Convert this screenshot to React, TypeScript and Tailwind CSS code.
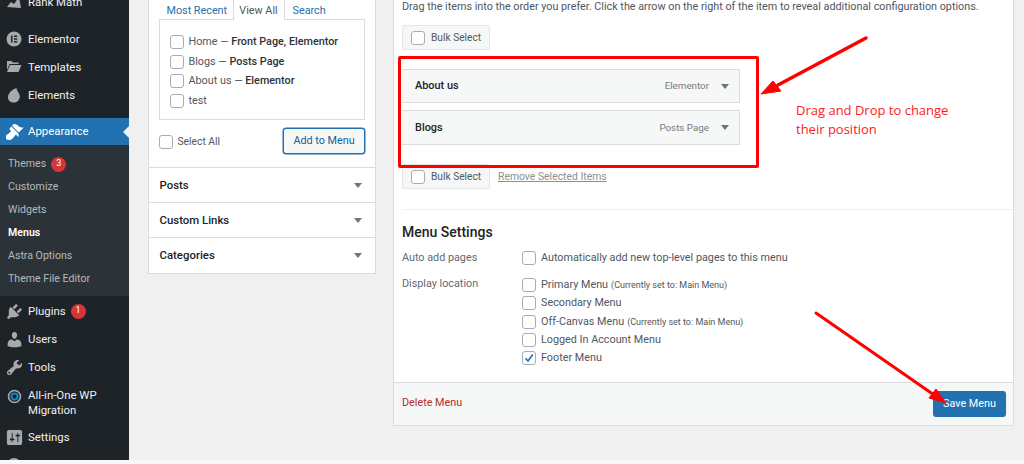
import React from "react";

const Dash = ({ d, size = 19 }: { d: string; size?: number }) => (
  <svg width={size} height={size} viewBox="0 0 20 20" fill="currentColor"><path d={d} /></svg>
);

const BRUSH = "M14.48 11.06L7.41 3.99l1.5-1.5c.5-.56 2.3-.47 3.51.32 1.21.8 1.43 1.28 2.91 2.1 1.18.64 2.45 1.26 4.45.85zm-.71.71L6.7 4.7 4.93 6.47c-.39.39-.39 1.02 0 1.41l1.06 1.06c.39.39.39 1.03 0 1.42-.6.6-1.43 1.11-2.21 1.69-.35.26-.7.53-1.01.84C1.43 13.23.48 14.62 1.5 18.5c3.88 1.02 5.27.07 6.78-1.44.31-.31.58-.66.84-1.01.58-.78 1.09-1.61 1.69-2.21.39-.39 1.03-.39 1.42 0l1.06 1.06c.39.39 1.02.39 1.41 0z";
const PLUG = "M13.11 4.36L9.87 7.6 8 5.73l3.24-3.24c.35-.34 1.05-.2 1.56.32.52.51.66 1.21.31 1.55zm-8 1.77l.91-1.12 9.01 9.01-1.19.84c-.71.71-2.63 1.16-3.82 1.16H6.14L4.9 17.26c-.59.59-1.54.59-2.12 0-.59-.58-.59-1.53 0-2.12l1.24-1.24v-3.88c0-1.13.4-3.19 1.09-3.89zm7.26 3.97l3.24-3.24c.34-.35 1.04-.21 1.55.31.52.51.66 1.21.31 1.55l-3.24 3.25z";
const USER = "M10 9.25c-2.27 0-2.73-3.44-2.73-3.44C7 4.02 7.82 2 9.97 2c2.16 0 2.98 2.02 2.71 3.81 0 0-.41 3.44-2.68 3.44zm0 2.57L12.72 10c2.39 0 4.52 2.33 4.52 4.53v2.49s-3.65 1.13-7.24 1.13c-3.65 0-7.24-1.13-7.24-1.13v-2.49c0-2.25 1.94-4.48 4.47-4.48z";
const TOOL = "M16.68 9.77c-1.34 1.34-3.3 1.67-4.95.99l-5.41 6.52c-.99.99-2.59.99-3.58 0s-.99-2.59 0-3.57l6.52-5.42c-.68-1.65-.35-3.61.99-4.95 1.28-1.28 3.12-1.62 4.72-1.06l-2.89 2.89 2.82 2.82 2.86-2.87c.53 1.58.18 3.39-1.08 4.65zM3.81 16.21c.4.39 1.04.39 1.43 0 .4-.4.4-1.04 0-1.43-.39-.4-1.03-.4-1.43 0-.39.39-.39 1.03 0 1.43z";
const SETTINGS = "M18 16V4c0-1.1-.9-2-2-2H4c-1.1 0-2 .9-2 2v12c0 1.1.9 2 2 2h12c1.1 0 2-.9 2-2zM8 11h1c.55 0 1 .45 1 1s-.45 1-1 1H8v1.5c0 .28-.22.5-.5.5s-.5-.22-.5-.5V13H6c-.55 0-1-.45-1-1s.45-1 1-1h1V5.5c0-.28.22-.5.5-.5s.5.22.5.5V11zm5-2h-1c-.55 0-1-.45-1-1s.45-1 1-1h1V5.5c0-.28.22-.5.5-.5s.5.22.5.5V7h1c.55 0 1 .45 1 1s-.45 1-1 1h-1v5.5c0 .28-.22.5-.5.5s-.5-.22-.5-.5V9z";

const Check = ({ on = false }: { on?: boolean }) => (
  <span className="w-[14px] h-[14px] shrink-0 rounded-[3px] border border-[#a9acb0] bg-white flex items-center justify-center">
    {on && (
      <svg width="12" height="12" viewBox="0 0 12 12"><path d="M2.5 6.2 L5 9 L9.8 2.6" fill="none" stroke="#2271b1" strokeWidth="1.7" /></svg>
    )}
  </span>
);

const Tri = () => <span className="block w-0 h-0 border-x-[4px] border-x-transparent border-t-[5.5px] border-t-[#70757a]" />;

const Top = ({ icon, children, badge }: { icon: React.ReactNode; children?: React.ReactNode; badge?: string }) => (
  <div className="h-[28px] flex items-center text-[#f0f0f1]">
    <span className="w-[26px] ml-[1px] shrink-0 flex justify-center text-[#a7aaad]">{icon}</span>
    <span className="ml-[1px] pt-[1px]">{children}</span>
    {badge && <Badge n={badge} />}
  </div>
);

const Badge = ({ n }: { n: string }) => (
  <span className="ml-[5px] w-[15px] h-[15px] rounded-full bg-[#d63638] text-white text-[9px] flex items-center justify-center">{n}</span>
);

const Sub = ({ children, bold, badge }: { children: React.ReactNode; bold?: boolean; badge?: string }) => (
  <div className={`h-[23px] pl-[8px] flex items-center text-[10.6px] ${bold ? "text-white font-semibold" : "text-[#b4b9be]"}`}>
    {children}
    {badge && <Badge n={badge} />}
  </div>
);

const PageItem = ({ label, note }: { label: string; note?: string }) => (
  <div className="h-[19.5px] flex items-center gap-[5px] whitespace-nowrap">
    <Check />
    <span>{label}{note && <> — <span className="font-medium text-[#2c3338]">{note}</span></>}</span>
  </div>
);

const Fold = ({ children, last }: { children: React.ReactNode; last?: boolean }) => (
  <div className={`h-[35px] flex items-center justify-between pl-[11px] pr-[13px] font-medium text-[#1d2327] text-[11.4px] ${last ? "" : "border-b border-[#dcdcde]"}`}>
    <span className="pt-[1px]">{children}</span>
    <Tri />
  </div>
);

const Bulk = () => (
  <div className="w-[88px] h-[25px] shrink-0 flex items-center gap-[6px] pl-[8px] bg-[#f6f7f7] border border-[#e5e6e7] rounded-[2px] text-[#50575e] text-[10.2px] whitespace-nowrap">
    <Check /><span className="pt-[1px]">Bulk Select</span>
  </div>
);

const MenuItem = ({ name, type, h, shift }: { name: string; type: string; h: string; shift?: boolean }) => (
  <div className={`${h} flex items-center border border-[#dcdcde] border-l-0 bg-[#f6f7f7] pl-[13px] pr-[10px]`}>
    <span className={`font-medium text-[#1d2327] text-[10.9px] ${shift ? "pt-[2px]" : ""}`}>{name}</span>
    <span className={`ml-auto text-[#787c82] text-[9.8px] ${shift ? "pt-[2px]" : ""}`}>{type}</span>
    <span className="ml-[12px]"><Tri /></span>
  </div>
);

const Loc = ({ label, note, on }: { label: string; note?: string; on?: boolean }) => (
  <div className="h-[18.3px] flex items-center gap-[5px] whitespace-nowrap">
    <Check on={on} />
    <span>{label}{note && <span className="text-[9px] ml-[3px]">{note}</span>}</span>
  </div>
);

export default function App() {
  return (
    <div className="relative w-[1024px] h-[464px] overflow-hidden bg-[#f0f0f1] flex flex-col text-[10.8px] text-[#50575e] font-['Roboto','Open_Sans',sans-serif]">
      <div className="h-[460px] flex items-start shrink-0">
        {/* Sidebar */}
        <aside className="w-[129px] h-[460px] shrink-0 bg-[#1d2327] overflow-hidden text-[11.4px]">
          <div className="-mt-[12px]">
            <div className="pb-[9px]">
              <Top icon={<svg width="16" height="16" viewBox="0 0 16 16" fill="currentColor"><path d="M1 13 L5 8 L8 10 L13 3 L15 14 Z" /></svg>}>Rank Math</Top>
            </div>
            <Top icon={<svg width="16" height="16" viewBox="0 0 16 16"><circle cx="8" cy="8" r="7.5" fill="#a7aaad" /><rect x="5" y="4.5" width="1.5" height="7" fill="#1d2327" /><rect x="8" y="4.5" width="3.2" height="1.5" fill="#1d2327" /><rect x="8" y="7.25" width="3.2" height="1.5" fill="#1d2327" /><rect x="8" y="10" width="3.2" height="1.5" fill="#1d2327" /></svg>}>Elementor</Top>
            <Top icon={<svg width="16" height="14" viewBox="0 0 16 14" fill="currentColor"><path d="M1 1 H5.5 L7 2.5 H12.5 V4 H3.5 L1 10 Z" /><path d="M4 5 H15.5 L12.5 12 H1 Z" /></svg>}>Templates</Top>
            <Top icon={<svg width="14" height="16" viewBox="0 0 14 16" fill="currentColor"><path d="M9.5 1 C5 2.5 1 6 1 10.5 C1 13.5 3.5 15.5 6.8 15.5 C10.5 15.5 12.8 12.8 12.8 9.5 C12.8 6 10 5 9.5 1 Z" /></svg>}>Elements</Top>
            <div className="h-[9px]" />
            <div className="relative h-[27px] bg-[#2271b1] flex items-center text-white">
              <span className="w-[26px] ml-[1px] shrink-0 flex justify-center"><Dash d={BRUSH} /></span>
              <span className="ml-[1px] pt-[1px]">Appearance</span>
              <span className="absolute right-0 top-[8px] w-0 h-0 border-y-[6px] border-y-transparent border-r-[6px] border-r-[#f0f0f1]" />
            </div>
            <div className="bg-[#2c3338] pt-[7.5px] pb-[5.5px]">
              <Sub badge="3">Themes</Sub>
              <Sub>Customize</Sub>
              <Sub>Widgets</Sub>
              <Sub bold>Menus</Sub>
              <Sub>Astra Options</Sub>
              <Sub>Theme File Editor</Sub>
            </div>
            <div className="h-[1px]" />
            <Top badge="1" icon={<Dash d={PLUG} />}>Plugins</Top>
            <Top icon={<Dash d={USER} />}>Users</Top>
            <Top icon={<Dash d={TOOL} />}>Tools</Top>
            <div className="h-[42px] flex items-start pt-[7px] text-[#f0f0f1] leading-[15px]">
              <span className="w-[26px] ml-[1px] shrink-0 flex justify-center">
                <svg width="15" height="16" viewBox="0 0 15 16" fill="none"><circle cx="7.5" cy="8.5" r="6" stroke="#a7aaad" strokeWidth="1.6" /><circle cx="7.5" cy="8.5" r="3" stroke="#0a84c8" strokeWidth="2.2" /></svg>
              </span>
              <span className="ml-[1px]">All-in-One WP<br />Migration</span>
            </div>
            <Top icon={<Dash d={SETTINGS} />}>Settings</Top>
            <Top icon={<svg width="16" height="16" viewBox="0 0 16 16" fill="currentColor"><circle cx="8" cy="8" r="7" /></svg>} />
          </div>
        </aside>

        {/* Left column */}
        <section className="ml-[18.5px] w-[228.5px] h-[274px] shrink-0 bg-white border border-[#dcdcde] border-t-0 flex flex-col">
          <div className="px-[10px] h-[168px] border-b border-[#dcdcde] flex flex-col">
            <div className="h-[19.5px] flex items-end text-[#2271b1] relative z-10 -mb-px whitespace-nowrap">
              <span className="w-[74px] pl-[8px]">Most Recent</span>
              <span className="w-[52px] h-full bg-white border-x border-[#dcdcde] text-[#50575e] flex items-end justify-center">View All</span>
              <span className="pl-[8px]">Search</span>
            </div>
            <div className="h-[101px] border border-[#dcdcde] pt-[13px] pl-[10px]">
              <PageItem label="Home" note="Front Page, Elementor" />
              <PageItem label="Blogs" note="Posts Page" />
              <PageItem label="About us" note="Elementor" />
              <PageItem label="test" />
            </div>
            <div className="mt-[8px] flex items-center justify-between">
              <span className="flex items-center gap-[5px] pt-[3px] text-[10.3px]"><Check />Select All</span>
              <span className="w-[82px] h-[26px] pt-[2px] flex items-center justify-center rounded-[3px] border border-[#2271b1] bg-[#f6f7f7] text-[#135e96] shadow-[0_0_0_0.5px_#2271b1]">Add to Menu</span>
            </div>
          </div>
          <Fold>Posts</Fold>
          <Fold>Custom Links</Fold>
          <Fold last>Categories</Fold>
        </section>

        {/* Right panel */}
        <section className="ml-[17px] w-[621px] h-[426px] shrink-0 bg-white border border-[#dcdcde] border-t-0 flex flex-col">
          <div className="flex-1 px-[8px]">
            <p className="h-[25px] leading-[13px] whitespace-nowrap">Drag the items into the order you prefer. Click the arrow on the right of the item to reveal additional configuration options.</p>
            <Bulk />
            <div className="w-[338px] mt-[19px] flex flex-col gap-[7px]">
              <MenuItem name="About us" type="Elementor" h="h-[34px]" />
              <MenuItem name="Blogs" type="Posts Page" h="h-[35px]" shift />
            </div>
            <div className="mt-[19px] flex items-center">
              <Bulk />
              <span className="ml-[8px] text-[#8c8f94] text-[10.4px] underline whitespace-nowrap">Remove Selected Items</span>
            </div>
            <div className="mt-[20px] border-t border-[#f0f0f1] -mr-[8px]" />
            <h3 className="mt-[12px] text-[14px] leading-[20px] font-medium text-[#1d2327]">Menu Settings</h3>
            <div className="mt-[6px] flex items-center h-[20px]">
              <span className="w-[120px] text-[#646970]">Auto add pages</span>
              <Loc label="Automatically add new top-level pages to this menu" />
            </div>
            <div className="mt-[8px] flex">
              <span className="w-[120px] text-[#646970]">Display location</span>
              <div>
                <Loc label="Primary Menu" note="(Currently set to: Main Menu)" />
                <Loc label="Secondary Menu" />
                <Loc label="Off-Canvas Menu" note="(Currently set to: Main Menu)" />
                <Loc label="Logged In Account Menu" />
                <Loc label="Footer Menu" on />
              </div>
            </div>
          </div>
          <div className="h-[43px] bg-[#f6f7f7] border-t border-[#dcdcde] flex items-center justify-between pl-[8px] pr-[7px]">
            <span className="text-[#b32d2e] -mt-[2px]">Delete Menu</span>
            <span className="w-[73px] h-[26px] pt-[1px] rounded-[3px] bg-[#2271b1] text-white flex items-center justify-center">Save Menu</span>
          </div>
        </section>
      </div>
      <div className="h-[4px] bg-[#f7f7f7] shrink-0" />

      {/* Annotations laid over the screenshot */}
      <div className="absolute left-[398px] top-[56px] w-[361px] h-[112px] border-[3.5px] border-[#ff0000] rounded-[2px]" />
      <div className="absolute left-[796px] top-[101px] text-[#ff1a1a] text-[13px] leading-[19px] font-['Open_Sans',sans-serif]">Drag and Drop to change<br />their position</div>
      <svg className="absolute left-0 top-0" width="1024" height="464" viewBox="0 0 1024 464" fill="none">
        <path d="M866 38 L778 85" stroke="#ff0000" strokeWidth="3.5" strokeLinecap="round" />
        <path d="M761 94 L773 81 L781 91 Z" fill="#ff0000" stroke="#ff0000" />
        <path d="M816 313 L937 397" stroke="#ff0000" strokeWidth="3" strokeLinecap="round" />
        <path d="M946 403 L929 398 L936 389 Z" fill="#ff0000" stroke="#ff0000" />
      </svg>
    </div>
  );
}
